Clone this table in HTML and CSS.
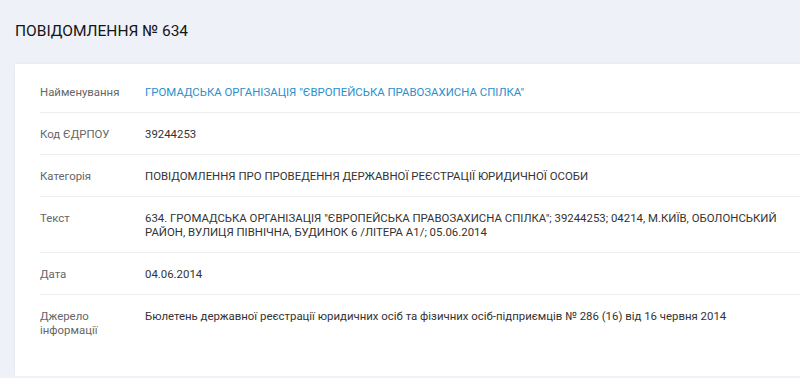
FILE: index.html
```html
<!DOCTYPE html>
<html lang="uk">
<head>
    <meta charset="UTF-8">
    <meta name="viewport" content="width=device-width, initial-scale=1.0">
    <title>Повідомлення № 634</title>
    <link rel="stylesheet" href="styles.css">
</head>
<body>
    <h1 class="page-title">ПОВІДОМЛЕННЯ № 634</h1>

    <div class="card">
        <div class="row">
            <div class="row-label">Найменування</div>
            <div class="row-value"><a class="link" href="#">ГРОМАДСЬКА ОРГАНІЗАЦІЯ "ЄВРОПЕЙСЬКА ПРАВОЗАХИСНА СПІЛКА"</a></div>
        </div>
        <div class="row">
            <div class="row-label">Код ЄДРПОУ</div>
            <div class="row-value">39244253</div>
        </div>
        <div class="row">
            <div class="row-label">Категорія</div>
            <div class="row-value">ПОВІДОМЛЕННЯ ПРО ПРОВЕДЕННЯ ДЕРЖАВНОЇ РЕЄСТРАЦІЇ ЮРИДИЧНОЇ ОСОБИ</div>
        </div>
        <div class="row">
            <div class="row-label">Текст</div>
            <div class="row-value">634. ГРОМАДСЬКА ОРГАНІЗАЦІЯ "ЄВРОПЕЙСЬКА ПРАВОЗАХИСНА СПІЛКА"; 39244253; 04214, М.КИЇВ, ОБОЛОНСЬКИЙ РАЙОН, ВУЛИЦЯ ПІВНІЧНА, БУДИНОК 6 /ЛІТЕРА А1/; 05.06.2014</div>
        </div>
        <div class="row">
            <div class="row-label">Дата</div>
            <div class="row-value">04.06.2014</div>
        </div>
        <div class="row row-last">
            <div class="row-label">Джерело інформації</div>
            <div class="row-value">Бюлетень державної реєстрації юридичних осіб та фізичних осіб-підприємців № 286 (16) від 16 червня 2014</div>
        </div>
    </div>
</body>
</html>
```

FILE: styles.css
```css
body {
    margin: 0;
    padding: 0 0 0 15px;
    background-color: #eef1f8;
    font-family: Roboto, "Liberation Sans", sans-serif;
    color: #333;
}

.page-title {
    margin: 0;
    padding: 21px 0 23px;
    font-size: 15.5px;
    line-height: 20px;
    font-weight: 400;
    color: #151515;
}

.card {
    background: #fff;
    box-shadow: 0 0 3px rgba(0, 0, 0, 0.06);
    padding: 7px 0 26px 25px;
}

.row {
    display: flex;
    padding: 14px 0 13px;
    border-bottom: 1px solid #eceef1;
    font-size: 11.4px;
    line-height: 14px;
}

.row-last {
    border-bottom: none;
}

.row-label {
    width: 105px;
    flex-shrink: 0;
    color: #666;
    padding-right: 10px;
    box-sizing: border-box;
}

.row-value {
    flex: 1;
    padding-right: 20px;
}

.link {
    color: #2b8fcb;
    text-decoration: none;
}
```
